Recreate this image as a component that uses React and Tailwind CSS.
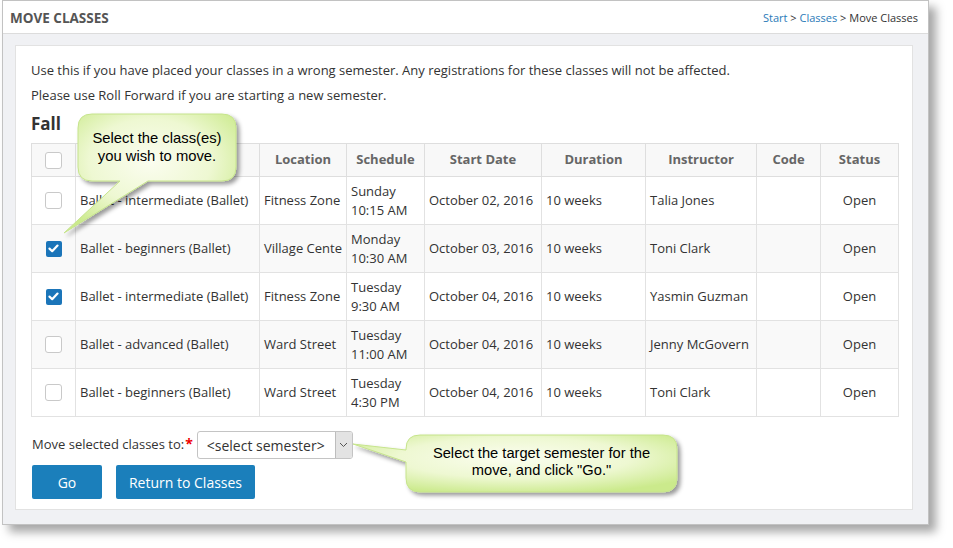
import React from "react";

const rows = [
  { checked: false, name: "Ballet - intermediate (Ballet)", loc: "Fitness Zone", day: "Sunday", time: "10:15 AM", date: "October 02, 2016", dur: "10 weeks", inst: "Talia Jones" },
  { checked: true, name: "Ballet - beginners (Ballet)", loc: "Village Cente", day: "Monday", time: "10:30 AM", date: "October 03, 2016", dur: "10 weeks", inst: "Toni Clark" },
  { checked: true, name: "Ballet - intermediate (Ballet)", loc: "Fitness Zone", day: "Tuesday", time: "9:30 AM", date: "October 04, 2016", dur: "10 weeks", inst: "Yasmin Guzman" },
  { checked: false, name: "Ballet - advanced (Ballet)", loc: "Ward Street", day: "Tuesday", time: "11:00 AM", date: "October 04, 2016", dur: "10 weeks", inst: "Jenny McGovern" },
  { checked: false, name: "Ballet - beginners (Ballet)", loc: "Ward Street", day: "Tuesday", time: "4:30 PM", date: "October 04, 2016", dur: "10 weeks", inst: "Toni Clark" },
];

function Checkbox({ checked }) {
  if (checked) {
    return (
      <div className="w-[16px] h-[16px] rounded-[2px] bg-[#1b75b9] flex items-center justify-center">
        <svg width="11" height="9" viewBox="0 0 11 9">
          <path d="M1.5 4.6 L4.2 7.2 L9.5 1.6" fill="none" stroke="white" strokeWidth="2.2" strokeLinecap="round" strokeLinejoin="round" />
        </svg>
      </div>
    );
  }
  return <div className="w-[17px] h-[17px] rounded-[3px] border border-[#c9c9c9] bg-white" />;
}

export default function App() {
  return (
    <div className="relative w-[953px] h-[548px] bg-white overflow-hidden font-['Open_Sans',sans-serif] text-[#333]">
      <div className="ml-[2px] w-[927px] h-[525px] border border-[#c2c2c2] bg-[#f0f1f4] shadow-[7px_7px_9px_rgba(0,0,0,0.35)] flex flex-col">
        <div className="h-[33px] shrink-0 bg-white border-b border-[#dcdcdc] flex items-center justify-between pl-[7px] pr-[10px] pt-[3px]">
          <div className="text-[13.5px] font-bold text-[#555]">MOVE CLASSES</div>
          <div className="text-[11px] text-[#333]">
            <span className="text-[#2a7ab8]">Start</span> &gt; <span className="text-[#2a7ab8]">Classes</span> &gt; Move Classes
          </div>
        </div>
        <div className="flex-1 pt-[11px] pl-[12px] pr-[15px] pb-[14px]">
          <div className="h-full bg-white border border-[#e2e2e2] pl-[15px] pt-[14px]">
            <p className="text-[13px] leading-[20px] mb-[5px]">
              Use this if you have placed your classes in a wrong semester. Any registrations for these classes will not be affected.
            </p>
            <p className="text-[13px] leading-[20px]">Please use Roll Forward if you are starting a new semester.</p>
            <h2 className="text-[17px] font-bold leading-[20px] mt-[9px] mb-[9px] text-[#333]">Fall</h2>
            <table className="table-fixed border-collapse w-[867px] text-[13px]">
              <colgroup>
                <col className="w-[44px]" />
                <col className="w-[184px]" />
                <col className="w-[87px]" />
                <col className="w-[78px]" />
                <col className="w-[117px]" />
                <col className="w-[104px]" />
                <col className="w-[111px]" />
                <col className="w-[64px]" />
                <col className="w-[78px]" />
              </colgroup>
              <thead>
                <tr className="bg-[#f8f8f8] h-[33px]">
                  <th className="border border-[#dedede] px-[4px]">
                    <div className="flex justify-center"><Checkbox checked={false} /></div>
                  </th>
                  <th className="border border-[#dedede] px-[4px] font-bold text-[#666]"></th>
                  <th className="border border-[#dedede] px-[4px] font-bold text-[#666]">Location</th>
                  <th className="border border-[#dedede] px-[4px] font-bold text-[#666]">Schedule</th>
                  <th className="border border-[#dedede] px-[4px] font-bold text-[#666]">Start Date</th>
                  <th className="border border-[#dedede] px-[4px] font-bold text-[#666]">Duration</th>
                  <th className="border border-[#dedede] px-[4px] font-bold text-[#666]">Instructor</th>
                  <th className="border border-[#dedede] px-[4px] font-bold text-[#666]">Code</th>
                  <th className="border border-[#dedede] px-[4px] font-bold text-[#666]">Status</th>
                </tr>
              </thead>
              <tbody>
                {rows.map((r, i) => (
                  <tr key={i} className={`h-[48px] ${i % 2 === 1 ? "bg-[#f9f9f9]" : "bg-white"}`}>
                    <td className="border border-[#e2e2e2] px-[4px]">
                      <div className="flex justify-center"><Checkbox checked={r.checked} /></div>
                    </td>
                    <td className="border border-[#e2e2e2] px-[4px] whitespace-nowrap">{r.name}</td>
                    <td className="border border-[#e2e2e2] px-[4px] whitespace-nowrap overflow-hidden">{r.loc}</td>
                    <td className="border border-[#e2e2e2] px-[4px] leading-[19px]">
                      <div>{r.day}</div>
                      <div>{r.time}</div>
                    </td>
                    <td className="border border-[#e2e2e2] px-[4px] whitespace-nowrap">{r.date}</td>
                    <td className="border border-[#e2e2e2] px-[4px] whitespace-nowrap">{r.dur}</td>
                    <td className="border border-[#e2e2e2] px-[4px] whitespace-nowrap">{r.inst}</td>
                    <td className="border border-[#e2e2e2] px-[4px]"></td>
                    <td className="border border-[#e2e2e2] px-[4px] text-center">Open</td>
                  </tr>
                ))}
              </tbody>
            </table>
            <div className="mt-[14px] flex items-center h-[28px] text-[13px]">
              <span className="pl-[1px]">Move selected classes to:</span>
              <span className="text-[#e00] font-bold text-[14px] ml-[1px] -mt-[4px]">*</span>
              <div className="ml-[4px] w-[156px] h-[28px] border border-[#c4c4c4] rounded-[3px] flex items-stretch overflow-hidden">
                <div className="flex-1 flex items-center pl-[9px] text-[14px] text-[#333]">&lt;select semester&gt;</div>
                <div className="w-[17px] bg-[#e3e3e3] border-l border-[#bdbdbd] flex items-center justify-center">
                  <svg width="9" height="6" viewBox="0 0 9 6">
                    <path d="M1 1 L4.5 4.5 L8 1" fill="none" stroke="#555" strokeWidth="1" />
                  </svg>
                </div>
              </div>
            </div>
            <div className="mt-[6px] flex gap-[14px] pl-[1px]">
              <button className="w-[70px] h-[34px] bg-[#1b7fbb] rounded-[2px] text-white text-[14px]">Go</button>
              <button className="w-[139px] h-[34px] bg-[#1b7fbb] rounded-[2px] text-white text-[14px]">Return to Classes</button>
            </div>
          </div>
        </div>
      </div>

      <svg className="absolute left-0 top-0 pointer-events-none" width="953" height="548" viewBox="0 0 953 548">
        <defs>
          <radialGradient id="cg" cx="50%" cy="40%" r="65%">
            <stop offset="0%" stopColor="#fbfdf0" />
            <stop offset="55%" stopColor="#eef8d2" />
            <stop offset="100%" stopColor="#cbea8c" />
          </radialGradient>
          <filter id="sh" x="-20%" y="-20%" width="150%" height="150%">
            <feDropShadow dx="3" dy="3" stdDeviation="2" floodColor="#000" floodOpacity="0.4" />
          </filter>
        </defs>
        <path
          d="M92 114 H222 Q236 114 236 128 V167 Q236 181 222 181 H148 L64 233 L120 181 H92 Q78 181 78 167 V128 Q78 114 92 114 Z"
          fill="url(#cg)"
          stroke="#c6e48c"
          strokeWidth="1"
          filter="url(#sh)"
        />
        <path
          d="M420 435 H663 Q677 435 677 449 V478 Q677 492 663 492 H420 Q406 492 406 478 V462 L353 444 L406 450 V449 Q406 435 420 435 Z"
          fill="url(#cg)"
          stroke="#c6e48c"
          strokeWidth="1"
          filter="url(#sh)"
        />
      </svg>
      <div className="absolute left-[78px] top-[129px] w-[158px] text-center font-['Liberation_Sans',Arial,sans-serif] text-[14.8px] leading-[18px] text-black">
        Select the class(es)
        <br />
        you wish to move.
      </div>
      <div className="absolute left-[406px] top-[445px] w-[271px] text-center font-['Liberation_Sans',Arial,sans-serif] text-[14.7px] leading-[17px] text-black">
        Select the target semester for the
        <br />
        move, and click "Go."
      </div>
    </div>
  );
}
